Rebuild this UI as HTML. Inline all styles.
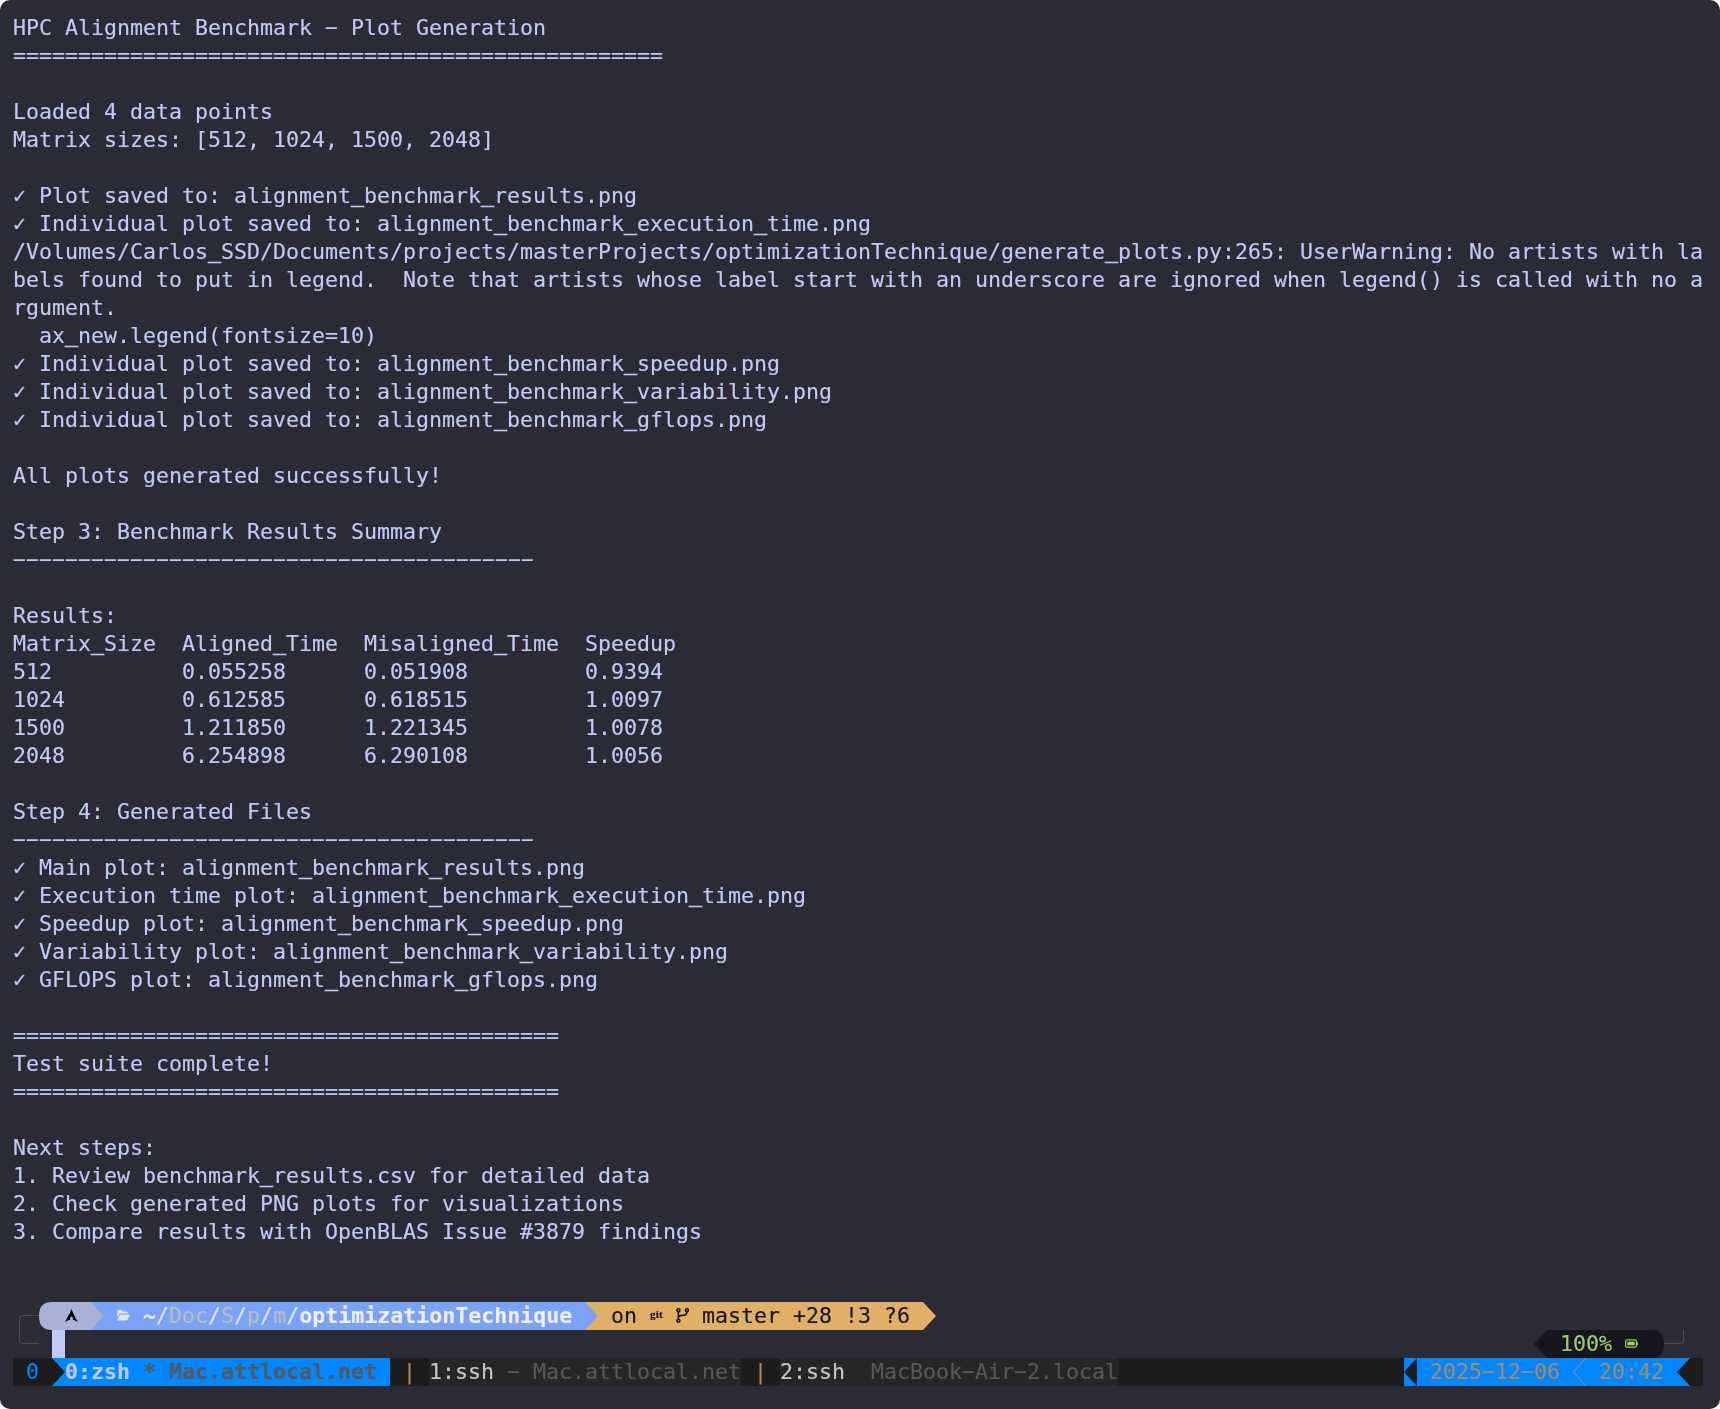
<!DOCTYPE html>
<html lang="en"><head><meta charset="utf-8"><title>Terminal</title>
<style>
html,body{margin:0;padding:0;background:#fff}
#t{position:relative;width:1720px;height:1409px;background:#2b2b36;border-radius:10px;overflow:hidden;
font-family:"DejaVu Sans Mono","Liberation Mono",monospace;font-size:21.6px;line-height:28px;color:#c0caf5;
font-variant-ligatures:none;font-kerning:none;-webkit-text-stroke:0.15px}
pre{margin:0;position:absolute;left:13px;top:14px;font:inherit;white-space:pre;will-change:transform}
.s{position:absolute;height:28px;white-space:pre;overflow:visible;will-change:transform}
.s svg{display:block;position:absolute;left:0;top:0}
.path i{font-style:normal;color:#bcbcbc}
.path b{color:#eeeeee}
.h{display:inline-block;transform:translateY(-0.85px) scaleX(1.98)}
.tl{display:inline-block;transform:scaleY(1.6)}
.git{font-family:"Liberation Serif",serif;font-weight:bold;font-size:11.2px;letter-spacing:0.2px;line-height:25.2px}
u{text-decoration:none;position:relative;top:-1.4px;-webkit-text-stroke:0.7px}
</style></head><body>
<div id="t">
<pre>HPC Alignment Benchmark <span class="h">-</span> Plot Generation
==================================================

Loaded 4 data points
Matrix sizes: [512, 1024, 1500, 2048]

✓ Plot saved to: alignment<u>_</u>benchmark<u>_</u>results.png
✓ Individual plot saved to: alignment<u>_</u>benchmark<u>_</u>execution<u>_</u>time.png
/Volumes/Carlos<u>_</u>SSD/Documents/projects/masterProjects/optimizationTechnique/generate<u>_</u>plots.py:265: UserWarning: No artists with la
bels found to put in legend.  Note that artists whose label start with an underscore are ignored when legend() is called with no a
rgument.
  ax<u>_</u>new.legend(fontsize=10)
✓ Individual plot saved to: alignment<u>_</u>benchmark<u>_</u>speedup.png
✓ Individual plot saved to: alignment<u>_</u>benchmark<u>_</u>variability.png
✓ Individual plot saved to: alignment<u>_</u>benchmark<u>_</u>gflops.png

All plots generated successfully!

Step 3: Benchmark Results Summary
<span class="h">-</span><span class="h">-</span><span class="h">-</span><span class="h">-</span><span class="h">-</span><span class="h">-</span><span class="h">-</span><span class="h">-</span><span class="h">-</span><span class="h">-</span><span class="h">-</span><span class="h">-</span><span class="h">-</span><span class="h">-</span><span class="h">-</span><span class="h">-</span><span class="h">-</span><span class="h">-</span><span class="h">-</span><span class="h">-</span><span class="h">-</span><span class="h">-</span><span class="h">-</span><span class="h">-</span><span class="h">-</span><span class="h">-</span><span class="h">-</span><span class="h">-</span><span class="h">-</span><span class="h">-</span><span class="h">-</span><span class="h">-</span><span class="h">-</span><span class="h">-</span><span class="h">-</span><span class="h">-</span><span class="h">-</span><span class="h">-</span><span class="h">-</span><span class="h">-</span>

Results:
Matrix<u>_</u>Size  Aligned<u>_</u>Time  Misaligned<u>_</u>Time  Speedup
512          0.055258      0.051908         0.9394
1024         0.612585      0.618515         1.0097
1500         1.211850      1.221345         1.0078
2048         6.254898      6.290108         1.0056

Step 4: Generated Files
<span class="h">-</span><span class="h">-</span><span class="h">-</span><span class="h">-</span><span class="h">-</span><span class="h">-</span><span class="h">-</span><span class="h">-</span><span class="h">-</span><span class="h">-</span><span class="h">-</span><span class="h">-</span><span class="h">-</span><span class="h">-</span><span class="h">-</span><span class="h">-</span><span class="h">-</span><span class="h">-</span><span class="h">-</span><span class="h">-</span><span class="h">-</span><span class="h">-</span><span class="h">-</span><span class="h">-</span><span class="h">-</span><span class="h">-</span><span class="h">-</span><span class="h">-</span><span class="h">-</span><span class="h">-</span><span class="h">-</span><span class="h">-</span><span class="h">-</span><span class="h">-</span><span class="h">-</span><span class="h">-</span><span class="h">-</span><span class="h">-</span><span class="h">-</span><span class="h">-</span>
✓ Main plot: alignment<u>_</u>benchmark<u>_</u>results.png
✓ Execution time plot: alignment<u>_</u>benchmark<u>_</u>execution<u>_</u>time.png
✓ Speedup plot: alignment<u>_</u>benchmark<u>_</u>speedup.png
✓ Variability plot: alignment<u>_</u>benchmark<u>_</u>variability.png
✓ GFLOPS plot: alignment<u>_</u>benchmark<u>_</u>gflops.png

==========================================
Test suite complete!
==========================================

Next steps:
1. Review benchmark<u>_</u>results.csv for detailed data
2. Check generated PNG plots for visualizations
3. Compare results with OpenBLAS Issue #3879 findings</pre>
<div style="position:absolute;left:19px;top:1315px;width:20px;height:29px;border:1px solid #4b4b4b;border-right:none;border-radius:4px 0 0 4px;box-sizing:border-box"></div>
<div class="s" style="left:39px;top:1302px;width:13px;"><svg width="13" height="28" viewBox="0 0 13 28"><path d="M13,0 C4.2,0 0,4.5 0,14 C0,23.5 4.2,28 13,28 Z" fill="#a9b1d6"/></svg></div>
<div class="s" style="left:52px;top:1302px;width:39px;background:#a9b1d6;"></div>
<div class="s" style="left:65px;top:1302px;width:13px;"><svg width="13" height="28" viewBox="0 0 13 28"><g transform="translate(0,7) scale(0.13)"><path d="M50,0 C45.5,10.9 42.8,18 37.9,28.5 C40.9,31.7 44.6,35.4 50.6,39.6 C44.1,36.9 39.7,34.3 36.4,31.5 C30.1,44.6 20.3,63.3 0.3,99.2 C16,90.1 28.2,84.5 39.5,82.4 C39,80.3 38.7,78.1 38.8,75.7 L38.8,75.2 C39,65.2 44.3,57.5 50.4,58 C56.6,58.5 61.4,67.1 61.1,77.1 C61.1,79 60.9,80.8 60.5,82.5 C71.7,84.7 83.8,90.3 99.3,99.2 C96.2,93.6 93.5,88.5 90.9,83.7 C86.8,80.5 82.5,76.4 73.8,71.9 C79.8,73.5 84.1,75.3 87.4,77.3 C61.1,28.3 59,21.8 50,0 Z" fill="#000"/></g></svg></div>
<div class="s" style="left:91px;top:1302px;width:13px;background:#7aa2f7;"><svg width="13" height="28" viewBox="0 0 13 28"><path d="M0,0 L13,14 L0,28 Z" fill="#a9b1d6"/></svg></div>
<div class="s" style="left:104px;top:1302px;width:481px;background:#7aa2f7;"></div>
<div class="s" style="left:117px;top:1302px;width:13px;"><svg width="13" height="28" viewBox="0 0 13 28"><g transform="translate(0,-0.9)"><path d="M0.3,10.2 Q0.3,9 1.5,9 H4.3 Q5.2,9 5.5,9.9 L5.7,10.4 H9.6 Q10.8,10.4 10.8,11.6 V12.4 H3.6 Q2.6,12.4 2.1,13.3 L0.3,16.8 Z M3.9,13.4 H12.4 Q13.2,13.4 12.8,14.2 L10.6,18.6 Q10.2,19.4 9.3,19.4 H0.7 Q-0.1,19.4 0.3,18.6 L2.7,14.2 Q3.1,13.4 3.9,13.4 Z" fill="#e4e4e4"/></g></svg></div>
<div class="s path" style="left:143px;top:1302px;width:429px;color:#e4e4e4;"><span class="tl">~</span>/<i>Doc</i>/<i>S</i>/<i>p</i>/<i>m</i>/<b>optimizationTechnique</b></div>
<div class="s" style="left:585px;top:1302px;width:13px;background:#e0af68;"><svg width="13" height="28" viewBox="0 0 13 28"><path d="M0,0 L13,14 L0,28 Z" fill="#7aa2f7"/></svg></div>
<div class="s" style="left:598px;top:1302px;width:325px;background:#e0af68;"></div>
<div class="s" style="left:611px;top:1302px;width:26px;color:#15161e;">on</div>
<div class="s git" style="left:650px;top:1302px;width:13px;color:#15161e">git</div>
<div class="s" style="left:676px;top:1302px;width:13px;"><svg width="13" height="28" viewBox="0 0 13 28"><g fill="none" stroke="#15161e" stroke-width="1.6"><circle cx="2.4" cy="8.2" r="1.5"/><circle cx="2.4" cy="18.7" r="1.5"/><circle cx="10.9" cy="8.2" r="1.5"/><path d="M2.4,9.8 V17.1 M10.9,9.8 C10.9,12.8 9,13.4 6.6,13.4 C4.6,13.4 3.2,13.8 2.4,15"/></g></svg></div>
<div class="s" style="left:702px;top:1302px;width:208px;color:#15161e;">master +28 !3 ?6</div>
<div class="s" style="left:923px;top:1302px;width:13px;"><svg width="13" height="28" viewBox="0 0 13 28"><path d="M0,0 L13,14 L0,28 Z" fill="#e0af68"/></svg></div>
<div class="s" style="left:52px;top:1330px;width:13px;background:#c0caf5;"></div>
<div class="s" style="left:1534px;top:1330px;width:13px;"><svg width="13" height="28" viewBox="0 0 13 28"><path d="M13,0 L0,14 L13,28 Z" fill="#15161e"/></svg></div>
<div class="s" style="left:1547px;top:1330px;width:104px;background:#15161e;"></div>
<div class="s" style="left:1560px;top:1330px;width:52px;color:#9ece6a;">100%</div>
<div class="s" style="left:1625px;top:1330px;width:13px;"><svg width="13" height="28" viewBox="0 0 13 28"><rect x="0.6" y="9.9" width="10.8" height="7.2" rx="1.6" fill="none" stroke="#9ece6a" stroke-width="1.2"/><rect x="2.4" y="11.7" width="7.2" height="3.6" fill="#9ece6a"/><rect x="11.6" y="12" width="1.2" height="3" fill="#9ece6a"/></svg></div>
<div class="s" style="left:1651px;top:1330px;width:13px;"><svg width="13" height="28" viewBox="0 0 13 28"><path d="M0,0 C8.8,0 13,4.5 13,14 C13,23.5 8.8,28 0,28 Z" fill="#15161e"/></svg></div>
<div style="position:absolute;left:1664px;top:1330px;width:20px;height:14px;border:1px solid #4b4b4b;border-left:none;border-top:none;border-radius:0 0 4px 0;box-sizing:border-box"></div>
<div class="s" style="left:13px;top:1358px;width:39px;background:#1c1c1c;color:#0087ff;"> 0 </div>
<div class="s" style="left:52px;top:1358px;width:13px;background:#0087ff;"><svg width="13" height="28" viewBox="0 0 13 28"><path d="M0,0 L13,14 L0,28 Z" fill="#1c1c1c"/></svg></div>
<div class="s" style="left:65px;top:1358px;width:325px;background:#0087ff;color:#585858;"><b><span style="color:#c0caf5">0:zsh</span> * Mac.attlocal.net </b></div>
<div class="s" style="left:390px;top:1358px;width:39px;background:#1c1c1c;color:#af875f;"> | </div>
<div class="s" style="left:429px;top:1358px;width:312px;background:#262626;color:#585858;"><span style="color:#c6c6c6">1:ssh</span> <span class="h">-</span> Mac.attlocal.net</div>
<div class="s" style="left:741px;top:1358px;width:39px;background:#1c1c1c;color:#af875f;"> | </div>
<div class="s" style="left:780px;top:1358px;width:338px;background:#262626;color:#585858;"><span style="color:#c6c6c6">2:ssh</span>  MacBook<span class="h">-</span>Air<span class="h">-</span>2.local</div>
<div class="s" style="left:1118px;top:1358px;width:286px;background:#1c1c1c;"></div>
<div class="s" style="left:1404px;top:1358px;width:13px;background:#0087ff;"><svg width="13" height="28" viewBox="0 0 13 28"><path d="M13,0 L0,14 L13,28 Z" fill="#1c1c1c"/></svg></div>
<div class="s" style="left:1417px;top:1358px;width:260px;background:#0087ff;color:#af875f;"> 2025<span class="h">-</span>12<span class="h">-</span>06   20:42 </div>
<div class="s" style="left:1573px;top:1358px;width:13px;"><svg width="13" height="28" viewBox="0 0 13 28"><path d="M12.6,0 L0.4,14 L12.6,28" fill="none" stroke="#af875f" stroke-width="1"/></svg></div>
<div class="s" style="left:1677px;top:1358px;width:13px;background:#0087ff;"><svg width="13" height="28" viewBox="0 0 13 28"><path d="M13,0 L0,14 L13,28 Z" fill="#1c1c1c"/></svg></div>
<div class="s" style="left:1690px;top:1358px;width:13px;background:#1c1c1c;"></div>
</div>
</body></html>
